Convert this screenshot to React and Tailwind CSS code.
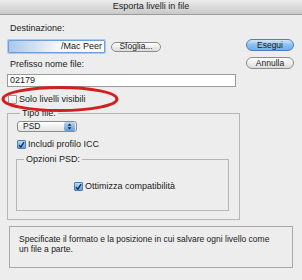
import React from "react";

const font = { fontFamily: '"Liberation Sans", Arial, sans-serif' };

function Check({ checked }) {
  return (
    <span
      className={
        "inline-flex items-center justify-center w-[9px] h-[9px] rounded-[1px] border " +
        (checked
          ? "border-[#4f7fb8] bg-gradient-to-b from-[#b9d8f4] to-[#5c9ee0]"
          : "border-[#9a9a9a] bg-gradient-to-b from-white to-[#e6e6e6]")
      }
    >
      {checked && (
        <svg width="8" height="8" viewBox="0 0 8 8">
          <path d="M1.2 4.2 L3.2 6.4 L7 0.8" stroke="#1b2a44" strokeWidth="1.5" fill="none" />
        </svg>
      )}
    </span>
  );
}

export default function App() {
  return (
    <div
      className="relative w-[302px] h-[280px] bg-[#ededed] text-[9px] text-[#1a1a1a] overflow-hidden"
      style={font}
    >
      {/* title bar */}
      <div className="h-[15px] flex items-center justify-center bg-gradient-to-b from-[#ececec] to-[#c9c9c9] border-b border-[#9c9c9c] text-[9px] text-[#222]">
        Esporta livelli in file
      </div>

      <div className="flex pl-[7px] pr-[8px]">
        {/* left column */}
        <div className="w-[233px] flex flex-col">
          <div className="pl-[3px] mt-[8px] h-[10px] leading-[10px]">Destinazione:</div>
          <div className="flex items-center mt-[7px]">
            <div className="ml-[1px] w-[97px] h-[13px] rounded-[1px] border border-[#6f9fd8] shadow-[0_0_0_1px_#a9c9ee] bg-gradient-to-r from-[#a9c8ec] via-[#f3f6fa] to-white flex items-center justify-end pr-[2px] text-[9px]">
              /Mac Peer
            </div>
            <div className="ml-[6px] w-[50px] h-[10px] rounded-full border border-[#8c8c8c] bg-gradient-to-b from-white to-[#dcdcdc] flex items-center justify-center text-[8.5px]">
              Sfoglia...
            </div>
          </div>
          <div className="pl-[3px] mt-[6px] h-[10px] leading-[10px]">Prefisso nome file:</div>
          <div className="mt-[5px] w-[229px] h-[13px] border border-[#9a9a9a] bg-white flex items-center pl-[2px] text-[9px]">
            02179
          </div>
          <div className="flex items-center mt-[8px] ml-[1px] gap-[2px] h-[9px]">
            <Check checked={false} />
            <span>Solo livelli visibili</span>
          </div>

          {/* Tipo file group */}
          <fieldset className="mt-[5px] w-[233px] h-[111px] border border-[#b5b5b5] px-[9px] pb-[6px]">
            <legend className="ml-[3px] px-[2px] leading-[9px] text-[9px]">Tipo file:</legend>
            <div className="mt-[3px] w-[60px] h-[11px] rounded-[3px] border border-[#8c8c8c] bg-gradient-to-b from-white to-[#e2e2e2] flex items-center justify-between pl-[5px] pr-[1px] text-[8.5px]">
              <span>PSD</span>
              <span className="w-[11px] h-[9px] rounded-[2px] bg-gradient-to-b from-[#b8d6f3] to-[#5c9ce0] flex items-center justify-center">
                <svg width="5" height="7" viewBox="0 0 5 7">
                  <path d="M0.5 2.8 L2.5 0.6 L4.5 2.8 Z M0.5 4.2 L2.5 6.4 L4.5 4.2 Z" fill="#1b2a44" />
                </svg>
              </span>
            </div>
            <div className="flex items-center gap-[2px] mt-[8px] h-[9px]">
              <Check checked />
              <span>Includi profilo ICC</span>
            </div>
            <fieldset className="mt-[6px] w-[213px] h-[56px] border border-[#b5b5b5] px-0 ml-[-1px]">
              <legend className="ml-[7px] px-[2px] leading-[9px] text-[9px]">Opzioni PSD:</legend>
              <div className="flex items-center gap-[2px] mt-[18px] ml-[57px] h-[9px]">
                <Check checked />
                <span>Ottimizza compatibilità</span>
              </div>
            </fieldset>
          </fieldset>
        </div>

        {/* right buttons */}
        <div className="ml-[6px] flex flex-col mt-[24px]">
          <div className="w-[48px] h-[12px] rounded-full border border-[#4f7fb8] bg-gradient-to-b from-[#d2e6f9] via-[#8cc0ef] to-[#6eb0ec] flex items-center justify-center text-[8.5px]">
            Esegui
          </div>
          <div className="mt-[6px] w-[48px] h-[12px] rounded-full border border-[#8c8c8c] bg-gradient-to-b from-white to-[#dcdcdc] flex items-center justify-center text-[8.5px]">
            Annulla
          </div>
        </div>
      </div>

      {/* description */}
      <div className="mx-[9px] mt-[6px] h-[42px] border border-[#a8a8a8] pl-[9px] pr-[22px] pt-[7px] text-[8.5px] leading-[10px]">
        Specificate il formato e la posizione in cui salvare ogni livello come un file a parte.
      </div>

      {/* red annotation ellipse */}
      <svg className="absolute left-0 top-[84px]" width="124" height="30" viewBox="0 0 124 30">
        <ellipse cx="60" cy="15" rx="57" ry="11.5" fill="none" stroke="#d21f1f" strokeWidth="3" />
      </svg>
    </div>
  );
}
